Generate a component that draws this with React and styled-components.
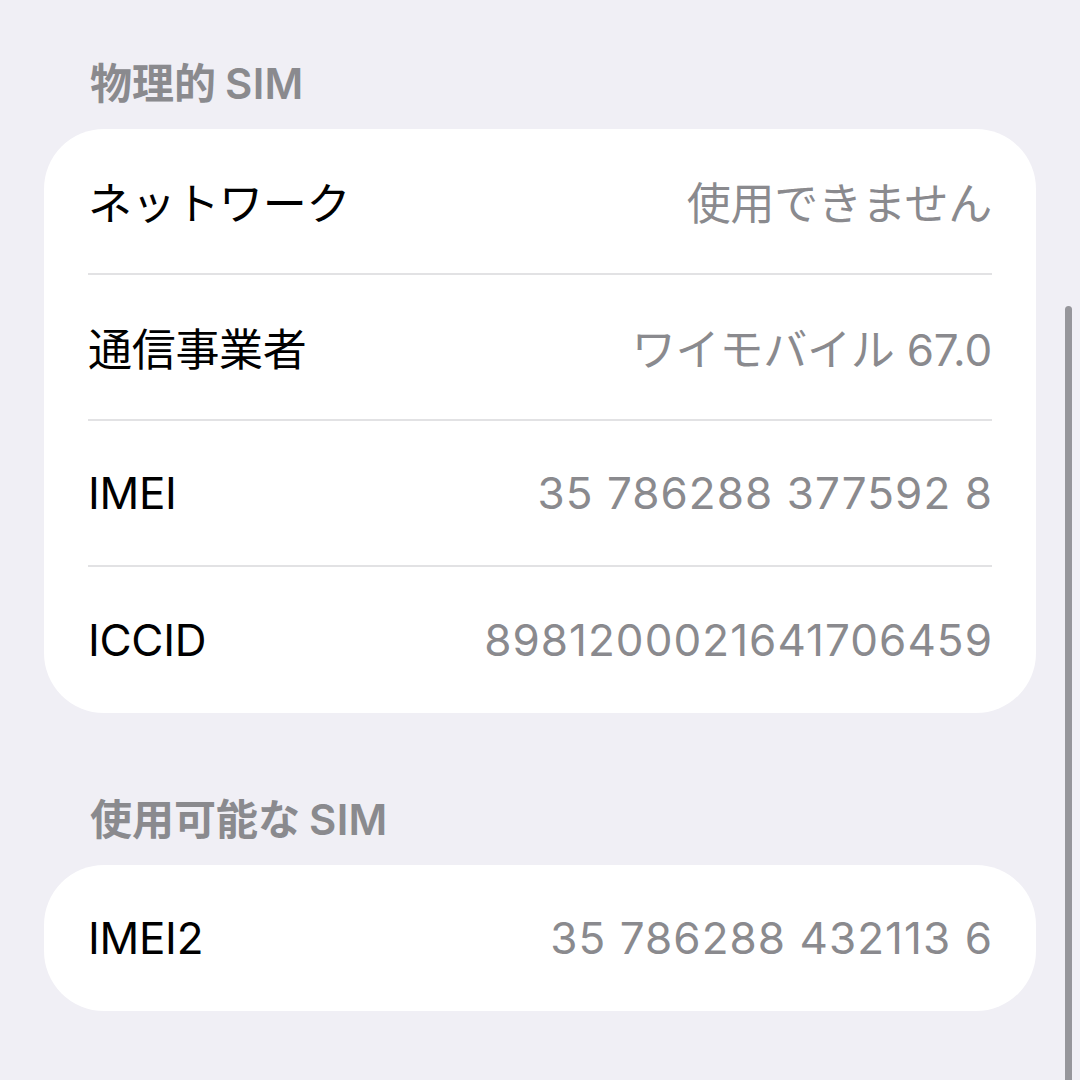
import React from 'react'
import styled, { createGlobalStyle } from 'styled-components'

const GlobalStyle = createGlobalStyle`
  html, body {
    margin: 0;
    padding: 0;
    background: #f0eff5;
  }
  body {
    font-family: "Inter", "Noto Sans CJK JP", sans-serif;
    -webkit-font-smoothing: antialiased;
  }
`

const Screen = styled.div`
  position: relative;
  width: 1080px;
  height: 1080px;
  overflow: hidden;
  background: #f0eff5;
  padding-top: 58px;
  box-sizing: border-box;
`

const SectionHeader = styled.div`
  height: 52px;
  line-height: 52px;
  padding: 0 90px 19px;
  font-size: 42px;
  font-weight: 600;
  color: #8a8a8e;
`

const Latin = styled.span`
  margin-left: 9px;
  letter-spacing: 0.3px;
`

const Card = styled.div`
  margin: 0 44px ${p => p.$gap || 0}px;
  background: #ffffff;
  border-radius: 60px;
  overflow: hidden;
`

const Row = styled.div`
  height: 146px;
  margin: 0 44px;
  display: flex;
  align-items: center;
  justify-content: space-between;
  box-sizing: border-box;
  border-bottom: ${p => (p.$last ? 'none' : '2px solid #e2e2e4')};
`

const Label = styled.span`
  font-size: 44px;
  color: #000;
  letter-spacing: -0.3px;
`

const Value = styled.span`
  font-size: 44px;
  color: #8a8a8e;
  letter-spacing: ${p => (p.$numeric ? '1.05px' : '-0.2px')};
  margin-right: ${p => (p.$numeric ? '-1px' : '0')};
`

const ScrollThumb = styled.div`
  position: absolute;
  right: 8px;
  top: 306px;
  width: 7px;
  height: 800px;
  border-radius: 4px;
  background: #96969b;
`

const physical = [
  ['ネットワーク', '使用できません'],
  ['通信事業者', 'ワイモバイル 67.0'],
  ['IMEI', '35 786288 377592 8', true],
  ['ICCID', '8981200021641706459', true],
]

const available = [['IMEI2', '35 786288 432113 6', true]]

const Section = ({ title, rows, gap }) => (
  <>
    <SectionHeader>
      {title}
      <Latin>SIM</Latin>
    </SectionHeader>
    <Card $gap={gap}>
      {rows.map(([label, value, numeric], i) => (
        <Row key={label} $last={i === rows.length - 1}>
          <Label>{label}</Label>
          <Value $numeric={numeric}>{value}</Value>
        </Row>
      ))}
    </Card>
  </>
)

export default function App() {
  return (
    <Screen>
      <GlobalStyle />
      <Section title="物理的" rows={physical} gap={81} />
      <Section title="使用可能な" rows={available} />
      <ScrollThumb />
    </Screen>
  )
}
